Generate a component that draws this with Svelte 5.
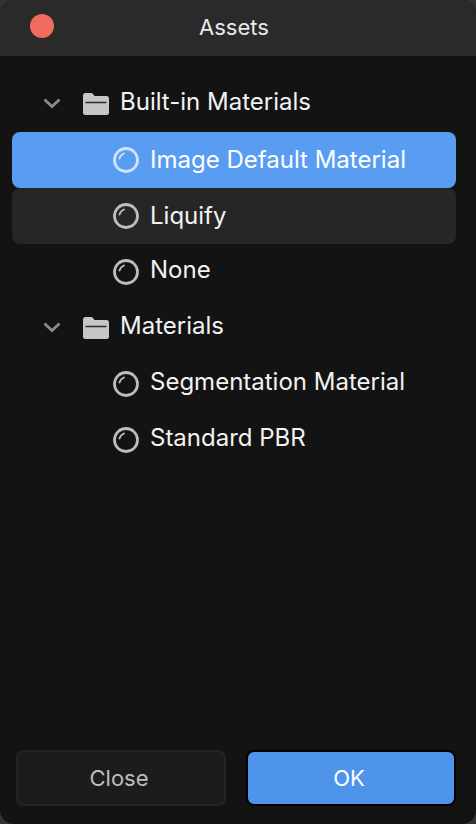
<script>
	const groups = [
		{
			name: 'Built-in Materials',
			items: [
				{ name: 'Image Default Material', state: 'selected' },
				{ name: 'Liquify', state: 'hover' },
				{ name: 'None', state: '' }
			]
		},
		{
			name: 'Materials',
			items: [
				{ name: 'Segmentation Material', state: '' },
				{ name: 'Standard PBR', state: '' }
			]
		}
	];
</script>

<div class="window">
	<header class="titlebar">
		<span class="close-dot"></span>
		<span class="title">Assets</span>
	</header>

	<div class="tree">
		{#each groups as group}
			<div class="group-row">
				<svg class="chevron" width="18" height="12" viewBox="0 0 18 12" fill="none">
					<path d="M1.500 1.500l7.500 7 7.500-7" stroke="#8a8a8a" stroke-width="2.800" />
				</svg>
				<svg class="folder" width="26" height="22" viewBox="0 0 26 22">
					<path
						d="M0 2.500a2.500 2.500 0 0 1 2.500-2.500h5.400c1 0 1.600.4 2.200 1.100l1.400 1.900h12a2.500 2.500 0 0 1 2.500 2.500v14a2.500 2.500 0 0 1-2.500 2.500h-21a2.500 2.500 0 0 1-2.500-2.500z"
						fill="#c6c6c6"
					/>
					<path d="M2.500 9.500h21" stroke="#2a2a2a" stroke-width="1.500" />
				</svg>
				<span class="group-name">{group.name}</span>
			</div>
			{#each group.items as item}
				<div class="item-row {item.state}">
					<svg class="material" width="28" height="28" viewBox="0 0 28 28" fill="none">
						<circle cx="14" cy="14" r="11.500" stroke-width="2.800" />
						<path d="M7.500 12.500a7 7 0 0 1 4.500-5" stroke-width="1.800" stroke-linecap="round" />
					</svg>
					<span class="item-name">{item.name}</span>
				</div>
			{/each}
		{/each}
	</div>

	<footer class="actions">
		<button class="btn secondary">Close</button>
		<button class="btn primary">OK</button>
	</footer>
</div>

<style>
	:global(body) {
		margin: 0;
		background: #333;
	}

	.window {
		width: 476px;
		height: 824px;
		display: flex;
		flex-direction: column;
		background: #131313;
		border-radius: 14px;
		overflow: hidden;
		font-family: Inter, 'Liberation Sans', sans-serif;
		color: #f2f2f2;
	}

	.titlebar {
		height: 56px;
		flex-shrink: 0;
		display: flex;
		align-items: center;
		justify-content: center;
		position: relative;
		background: #2a2a2a;
	}

	.close-dot {
		position: absolute;
		left: 30px;
		top: 14px;
		width: 24px;
		height: 24px;
		border-radius: 50%;
		background: #ef6a5f;
	}

	.title {
		font-size: 22px;
		margin: -2px 8px 0 0;
		color: #e8e8e8;
	}

	.tree {
		flex: 1;
		padding: 20px 20px 0 12px;
	}

	.group-row {
		height: 56px;
		display: flex;
		align-items: center;
		padding-left: 31px;
	}

	.chevron {
		margin-right: 22px;
	}

	.folder {
		margin-right: 11px;
	}

	.group-name,
	.item-name {
		font-size: 24px;
		margin-top: -6px;
		white-space: nowrap;
	}

	.item-row {
		height: 56px;
		display: flex;
		align-items: center;
		padding-left: 100px;
		border-radius: 8px;
	}

	.item-row.selected {
		background: #589df2;
		color: #fff;
	}

	.item-row.hover {
		background: #262626;
	}

	.selected .item-name,
	.hover .item-name {
		margin-top: -2px;
	}

	.material {
		margin-right: 10px;
		stroke: #bdbdbd;
	}

	.selected .material {
		stroke: #cfe3fb;
	}

	.actions {
		flex-shrink: 0;
		display: flex;
		justify-content: space-between;
		padding: 0 20px 18px 16px;
	}

	.btn {
		width: 210px;
		height: 56px;
		padding: 0 4px 0 0;
		border-radius: 8px;
		font-family: inherit;
		font-size: 22px;
	}

	.secondary {
		background: #1c1c1c;
		border: 2px solid #242424;
		color: #bdbdbd;
	}

	.primary {
		background: #4d94ea;
		border: 2px solid #000;
		color: #fff;
	}
</style>
